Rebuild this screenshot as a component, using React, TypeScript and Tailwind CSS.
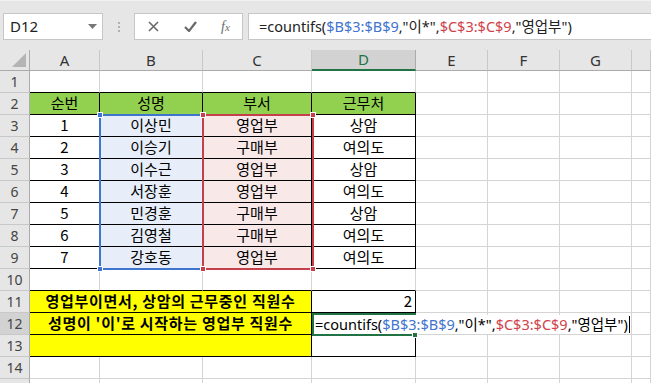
import React from "react";

const COLS = ["A", "B", "C", "D", "E", "F", "G", ""];
const FONT = { fontFamily: '"Noto Sans CJK KR", "Noto Sans", sans-serif' };
const UIFONT = { fontFamily: '"Noto Sans", "Noto Sans CJK KR", sans-serif' };

type Cell = { t?: React.ReactNode; c?: string; span?: number };

const G = "border-r border-b border-[#d4d4d4]";
const base = "h-[22px] flex items-center justify-center text-[15px] text-black overflow-hidden whitespace-nowrap";

function tableRow(vals: string[], fills: string[]): Cell[] {
  return vals.map((v, i) => ({
    t: v,
    c: `border-r border-b border-r-black border-b-black ${fills[i]}`,
  }));
}

const names = ["이상민", "이승기", "이수근", "서장훈", "민경훈", "김영철", "강호동"];
const depts = ["영업부", "구매부", "영업부", "영업부", "구매부", "구매부", "영업부"];
const locs = ["상암", "여의도", "상암", "여의도", "상암", "여의도", "여의도"];

const empty = (n: number): Cell[] => Array.from({ length: n }, () => ({ c: G }));
const blackBottom = (): Cell[] =>
  Array.from({ length: 4 }, () => ({ c: "border-r border-b border-r-[#d4d4d4] border-b-black" }));

const rows: Cell[][] = [
  [...blackBottom(), ...empty(3)],
  [
    ...tableRow(["순번", "성명", "부서", "근무처"], ["bg-[#92d050]", "bg-[#92d050]", "bg-[#92d050]", "bg-[#92d050]"]),
    ...empty(3),
  ],
  ...names.map((n, i) => [
    ...tableRow([String(i + 1), n, depts[i], locs[i]], ["bg-white", "bg-[#e7eef9]", "bg-[#f9e8e8]", "bg-white"]),
    ...empty(3),
  ]),
  [...blackBottom(), ...empty(3)],
  [
    { t: "영업부이면서, 상암의 근무중인 직원수", span: 3, c: "border-r border-b border-black bg-[#ffff00] font-bold tracking-[0.7px]" },
    { t: "2", c: "border-r border-b border-black !justify-end pr-[3px]" },
    ...empty(3),
  ],
  [
    { t: "성명이 '이'로 시작하는 영업부 직원수", span: 3, c: "border-r border-b border-black bg-[#ffff00] font-bold tracking-[0.7px]" },
    { c: "border-r border-b border-black" },
    ...empty(3),
  ],
  [
    { span: 3, c: "border-r border-b border-black bg-[#ffff00]" },
    { c: "border-r border-b border-black" },
    ...empty(3),
  ],
  empty(7),
  empty(7),
];

function Formula() {
  return (
    <>
      <span>=countifs(</span>
      <span className="text-[#3f74cf]">$B$3:$B$9</span>
      <span>,"이*",</span>
      <span className="text-[#d0414a]">$C$3:$C$9</span>
      <span>,"영업부")</span>
    </>
  );
}

export default function App() {
  return (
    <div className="w-[651px] h-[383px] overflow-hidden bg-white" style={UIFONT}>
      {/* Formula bar */}
      <div className="h-[50px] bg-[#e6e6e6] border-t border-[#f2f2f2] flex items-start pt-[12px]">
        <div className="ml-[3px] w-[100px] h-[27px] bg-white border border-[#c6c6c6] flex items-center pl-[6px] pr-[5px]">
          <span className="text-[15px] text-[#222] flex-1">D12</span>
          <svg width="9" height="5" viewBox="0 0 9 5"><path d="M0 0h9L4.5 5z" fill="#777" /></svg>
        </div>
        <div className="w-[31px] h-[27px] flex flex-col items-center justify-center gap-[2px]">
          <div className="w-[2px] h-[2px] bg-[#b0b0b0]" />
          <div className="w-[2px] h-[2px] bg-[#b0b0b0]" />
          <div className="w-[2px] h-[2px] bg-[#b0b0b0]" />
        </div>
        <div className="w-[109px] h-[27px] bg-white border border-[#c6c6c6] flex items-center">
          <div className="w-[37px] flex justify-center">
            <svg width="11" height="11" viewBox="0 0 11 11"><path d="M1 1L10 10M10 1L1 10" stroke="#6a6a6a" strokeWidth="1.6" /></svg>
          </div>
          <div className="w-[37px] flex justify-center">
            <svg width="13" height="11" viewBox="0 0 13 11"><path d="M1 6L5 10L12 1" stroke="#6a6a6a" strokeWidth="2.2" fill="none" /></svg>
          </div>
          <div className="w-[33px] flex justify-center">
            <span className="text-[14px] italic text-[#6a6a6a]" style={{ fontFamily: '"Liberation Serif", serif' }}>
              f<span className="text-[11px]">x</span>
            </span>
          </div>
        </div>
        <div className="ml-[5px] flex-1 h-[27px] bg-white border border-r-0 border-[#c6c6c6] flex items-center pl-[10px] text-[14.5px] text-[#222] whitespace-nowrap">
          <Formula />
        </div>
      </div>

      {/* Sheet */}
      <div className="relative" style={FONT}>
        <div className="grid grid-cols-[30px_70px_103px_109px_104px_72px_72px_72px_19px]">
          {/* header row */}
          <div className="h-[21px] bg-[#e6e6e6] border-r border-b border-[#ababab] relative">
            <svg className="absolute right-[3px] bottom-[3px]" width="14" height="14" viewBox="0 0 14 14"><path d="M14 0V14H0z" fill="#b4b4b4" /></svg>
          </div>
          {COLS.map((c, i) => (
            <div
              key={i}
              className={
                c === "D"
                  ? "h-[21px] bg-[#d2d2d2] border-r border-[#ababab] border-b-2 border-b-[#217346] flex items-center justify-center text-[15px] text-[#217346]"
                  : "h-[21px] bg-[#e6e6e6] border-r border-r-[#c8c8c8] border-b border-b-[#ababab] flex items-center justify-center text-[15px] text-[#333]"
              }
              style={UIFONT}
            >
              {c}
            </div>
          ))}
          {rows.map((r, ri) => (
            <React.Fragment key={ri}>
              <div
                className={
                  ri === 11
                    ? "h-[22px] bg-[#d2d2d2] border-r border-r-[#ababab] border-b border-b-[#c8c8c8] flex items-center justify-center text-[14px] text-[#444]"
                    : "h-[22px] bg-[#e6e6e6] border-r border-r-[#ababab] border-b border-b-[#c8c8c8] flex items-center justify-center text-[14px] text-[#444]"
                }
                style={UIFONT}
              >
                {ri < 14 ? ri + 1 : ""}
              </div>
              {r.map((cell, ci) => (
                <div
                  key={ci}
                  className={`${base} ${cell.c ?? G} ${cell.span === 3 ? "col-span-3" : ""}`}
                >
                  {cell.t}
                </div>
              ))}
              <div className={`${base} ${G}`} />
            </React.Fragment>
          ))}
        </div>

        {/* Range highlights */}
        <div className="absolute left-[99px] top-[64px] w-[105px] h-[156px] border-2 border-[#3f74cf]" />
        <div className="absolute left-[202px] top-[64px] w-[112px] h-[156px] border-2 border-[#c4404a]" />
        <div className="absolute left-[97px] top-[62px] w-[6px] h-[6px] bg-[#3f74cf] border border-white" />
        <div className="absolute left-[97px] top-[216px] w-[6px] h-[6px] bg-[#3f74cf] border border-white" />
        <div className="absolute left-[200px] top-[62px] w-[6px] h-[6px] bg-[#c4404a] border border-white" />
        <div className="absolute left-[310px] top-[62px] w-[6px] h-[6px] bg-[#c4404a] border border-white" />
        <div className="absolute left-[200px] top-[216px] w-[6px] h-[6px] bg-[#c4404a] border border-white" />
        <div className="absolute left-[310px] top-[216px] w-[6px] h-[6px] bg-[#c4404a] border border-white" />

        {/* Active cell */}
        <div className="absolute left-[312px] top-[263px] w-[104px] h-[23px] border-2 border-r-0 border-[#217346]" />
        <div className="absolute left-[314px] top-[265px] w-[317px] h-[19px] bg-white flex items-center pl-[1px] text-[14.5px] text-black whitespace-nowrap" style={UIFONT}>
          <Formula />
          <span className="inline-block w-[1px] h-[17px] bg-black ml-[1px]" />
        </div>
        <div className="absolute left-[412px] top-[282px] w-[6px] h-[6px] bg-[#217346] border border-white" />
      </div>
    </div>
  );
}
